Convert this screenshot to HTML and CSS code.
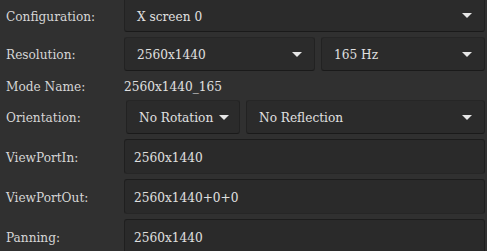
FILE: index.html
```html
<!DOCTYPE html>
<html lang="en">
  <head>
    <meta charset="UTF-8" />
    <title>Display Settings</title>
    <link rel="stylesheet" href="styles.css">
  </head>
  <body>
    <div class="form">
      <div class="label row-config">Configuration:</div>
      <div class="row-config">
        <div class="combo first">
          <span>X screen 0</span><span class="arrow"></span>
        </div>
      </div>

      <div class="label row-res">Resolution:</div>
      <div class="pair row-res">
        <div class="combo res">
          <span>2560x1440</span><span class="arrow"></span>
        </div>
        <div class="combo grow">
          <span>165 Hz</span><span class="arrow"></span>
        </div>
      </div>

      <div class="label row-mode">Mode Name:</div>
      <div class="plain row-mode">2560x1440_165</div>

      <div class="label row-orient">Orientation:</div>
      <div class="pair row-orient">
        <div class="combo rot">
          <span>No Rotation</span><span class="arrow"></span>
        </div>
        <div class="combo grow">
          <span>No Reflection</span><span class="arrow"></span>
        </div>
      </div>

      <div class="label row-entry">ViewPortIn:</div>
      <div class="entry row-entry">2560x1440</div>

      <div class="label row-entry">ViewPortOut:</div>
      <div class="entry row-entry">2560x1440+0+0</div>

      <div class="label row-entry">Panning:</div>
      <div class="entry row-entry">2560x1440</div>
    </div>
  </body>
</html>
```

FILE: styles.css
```css
body {
  margin: 0;
  background-color: #303030;
  color: #e0e0e0;
  font-family: "DejaVu Serif Condensed", "DejaVu Serif", serif;
  font-size: 13.5px;
  overflow: hidden;
}
.form {
  display: grid;
  grid-template-columns: 124px 1fr;
  row-gap: 5px;
  padding-right: 2px;
}
.label {
  padding-left: 6px;
  display: flex;
  align-items: center;
  color: #d6d6d6;
}
.row-config {
  height: 32px;
}
.row-res {
  height: 34px;
}
.row-mode {
  height: 19px;
}
.row-orient {
  height: 34px;
}
.row-entry {
  height: 35px;
}
.pair {
  display: flex;
  gap: 6px;
}
.combo {
  box-sizing: border-box;
  height: 100%;
  display: flex;
  align-items: center;
  justify-content: space-between;
  padding: 0 12px;
  background-color: #2b2b2b;
  border: 1px solid #222;
  border-top-color: #262626;
  border-bottom-color: #1a1a1a;
  border-radius: 3px;
}
.combo.first {
  border-top: none;
  border-radius: 0 0 3px 3px;
}
.combo.res {
  width: 191px;
}
.combo.rot {
  width: 114px;
  margin-left: 2px;
  padding-right: 10px;
}
.grow {
  flex: 1;
}
.arrow {
  width: 0;
  height: 0;
  border-left: 5px solid transparent;
  border-right: 5px solid transparent;
  border-top: 5px solid #e6e6e6;
}
.plain {
  display: flex;
  align-items: center;
}
.entry {
  box-sizing: border-box;
  display: flex;
  align-items: center;
  padding-left: 9px;
  background-color: #2a2a2a;
  border: 1px solid #1f1f1f;
  border-top-color: #1c1c1c;
  border-bottom-color: #262626;
  border-radius: 3px;
}
```
